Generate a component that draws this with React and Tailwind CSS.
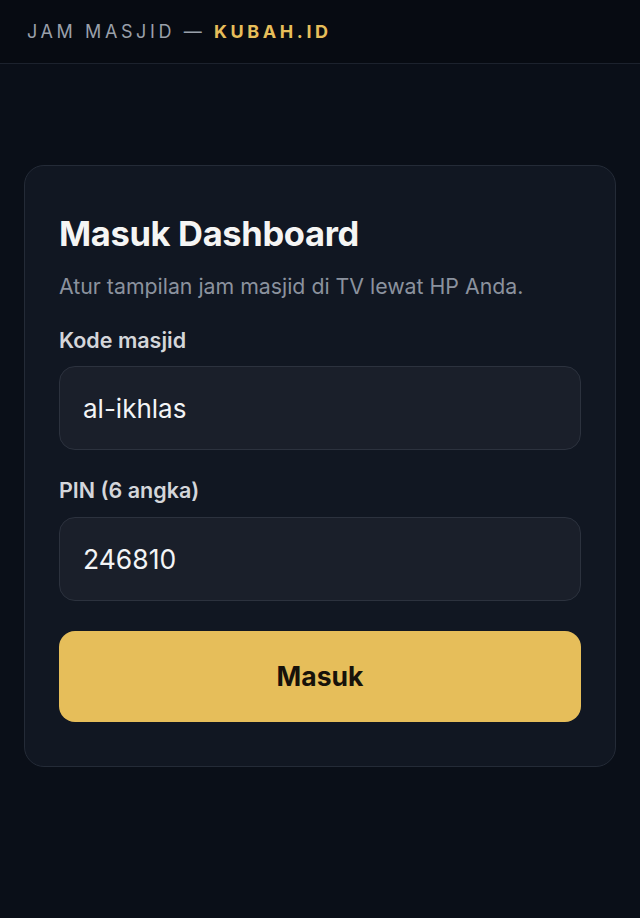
export default function App() {
  return (
    <div
      className="min-h-[918px] bg-[#0a0f18] text-white"
      style={{ fontFamily: "Inter, 'Noto Sans', sans-serif" }}
    >
      <header className="h-[64px] bg-[#070b12] border-b border-[#1c222d] flex items-center px-[27px]">
        <div className="text-[18px] tracking-[0.2em] text-[#9aa0aa]">
          JAM MASJID — <span className="font-bold text-[#e6be5a]">KUBAH.ID</span>
        </div>
      </header>

      <main className="px-[24px] pt-[101px]">
        <div className="rounded-[20px] border border-[#242b37] bg-[#111722] px-[34px] pt-[48px] pb-[44px]">
          <h1 className="text-[34.5px] leading-[40px] font-bold text-[#f5f5f4] tracking-[-0.01em]">
            Masuk Dashboard
          </h1>
          <p className="mt-[18px] text-[21.3px] leading-[28px] text-[#8b929e]">
            Atur tampilan jam masjid di TV lewat HP Anda.
          </p>

          <label className="block mt-[26px] text-[21.5px] leading-[28px] font-semibold text-[#d4d6da]">
            Kode masjid
          </label>
          <input
            defaultValue="al-ikhlas"
            className="mt-[12px] w-full h-[84px] rounded-[16px] border border-[#2c323e] bg-[#1a1f2a] px-[23px] text-[26px] text-[#f3f4f6] outline-none"
          />

          <label className="block mt-[26px] text-[21.5px] leading-[28px] font-semibold text-[#d4d6da]">
            PIN (6 angka)
          </label>
          <input
            defaultValue="246810"
            inputMode="numeric"
            className="mt-[13px] w-full h-[84px] rounded-[16px] border border-[#2c323e] bg-[#1a1f2a] px-[23px] text-[26.5px] text-[#f3f4f6] outline-none"
          />

          <button className="mt-[30px] w-full h-[91px] rounded-[16px] bg-[#e6be5a] text-[26.5px] font-bold text-[#17120a]">
            Masuk
          </button>
        </div>
      </main>
    </div>
  );
}
